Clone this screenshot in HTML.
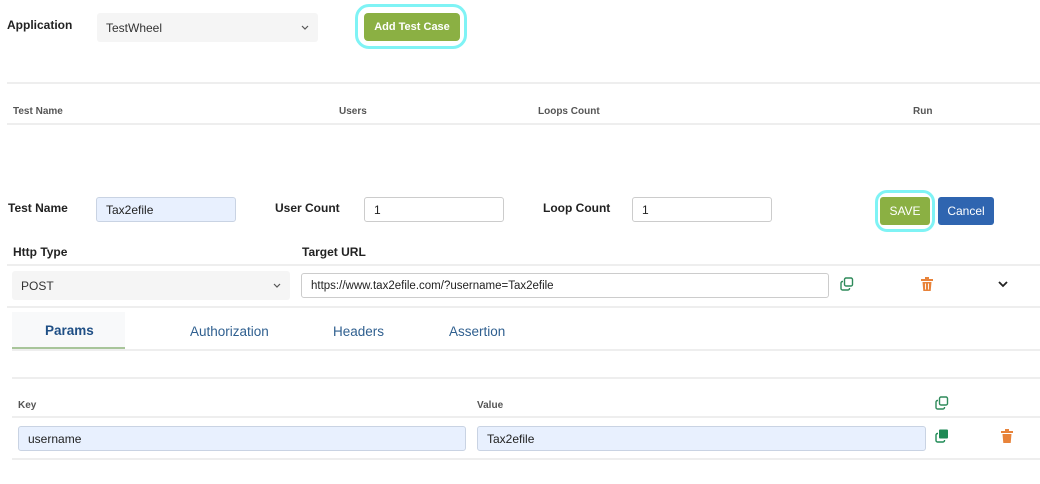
<!DOCTYPE html>
<html><head><meta charset="utf-8"><style>
*{box-sizing:border-box;margin:0;padding:0}
body{width:1040px;height:484px;background:#fff;font-family:"Liberation Sans",Arial,sans-serif;position:relative;overflow:hidden;color:#222}
.a{position:absolute}
.lbl{font-weight:bold;font-size:12px;color:#222}
.th{font-weight:bold;font-size:10px;color:#555}
.hr{position:absolute;height:2px;background:#eee}
.inp{position:absolute;border:1px solid #ccc;border-radius:3px;background:#fff;font-size:12px;padding-left:9px;display:flex;align-items:center}
.blue{background:#e8f0fe;border-color:#c9d3e3}
.sel{position:absolute;background:#f5f5f5;border-radius:3px;font-size:12px;color:#333;display:flex;align-items:center;padding-left:9px}
.tab{position:absolute;font-size:13.5px;color:#2f5f8f;top:324px}
</style></head><body>
<div class="a lbl" style="left:7px;top:18px">Application</div>
<div class="sel" style="left:97px;top:13px;width:221px;height:29px">TestWheel
<svg class="a" style="left:204px;top:12px" width="8" height="6" viewBox="0 0 8 6"><path d="M1 1l3 3 3-3" stroke="#555" fill="none" stroke-width="1.2"/></svg></div>
<div class="a" style="left:355px;top:4px;width:112px;height:45px;border:3px solid #7ff3f5;border-radius:14px"></div>
<div class="a" style="left:364px;top:13px;width:96px;height:28px;background:#8bb043;border-radius:4px;color:#fff;font-weight:bold;font-size:11px;display:flex;align-items:center;justify-content:center">Add Test Case</div>
<div class="hr" style="left:7px;top:82px;width:1033px"></div>
<div class="a th" style="left:13px;top:106px">Test Name</div>
<div class="a th" style="left:339px;top:106px">Users</div>
<div class="a th" style="left:538px;top:106px">Loops Count</div>
<div class="a th" style="left:913px;top:106px">Run</div>
<div class="hr" style="left:7px;top:123px;width:1033px"></div>

<div class="a lbl" style="left:8px;top:201px">Test Name</div>
<div class="inp blue" style="left:96px;top:197px;width:140px;height:25px">Tax2efile</div>
<div class="a lbl" style="left:275px;top:201px">User Count</div>
<div class="inp" style="left:364px;top:197px;width:140px;height:25px">1</div>
<div class="a lbl" style="left:543px;top:201px">Loop Count</div>
<div class="inp" style="left:632px;top:197px;width:140px;height:25px">1</div>
<div class="a" style="left:875px;top:190px;width:60px;height:42px;border:3px solid #7ff3f5;border-radius:12px"></div>
<div class="a" style="left:880px;top:197px;width:50px;height:28px;background:#8bb043;border-radius:3px;color:#fff;font-size:12px;display:flex;align-items:center;justify-content:center">SAVE</div>
<div class="a" style="left:938px;top:197px;width:56px;height:28px;background:#2f65b0;border-radius:3px;color:#fff;font-size:12px;display:flex;align-items:center;justify-content:center">Cancel</div>

<div class="a lbl" style="left:13px;top:245px">Http Type</div>
<div class="a lbl" style="left:302px;top:245px">Target URL</div>
<div class="hr" style="left:7px;top:264px;width:1033px"></div>
<div class="sel" style="left:12px;top:271px;width:278px;height:29px">POST
<svg class="a" style="left:261px;top:12px" width="8" height="6" viewBox="0 0 8 6"><path d="M1 1l3 3 3-3" stroke="#555" fill="none" stroke-width="1.2"/></svg></div>
<div class="inp" style="left:301px;top:273px;width:528px;height:25px;font-size:11.5px">https://www.tax2efile.com/?username=Tax2efile</div>
<svg class="a" style="left:840px;top:277px" width="14" height="14" viewBox="0 0 14 14"><rect x="4.5" y="1" width="8" height="8" rx="1.5" fill="none" stroke="#2e8a5a" stroke-width="1.4"/><path d="M3 4.5H2.5A1.5 1.5 0 0 0 1 6v5.5A1.5 1.5 0 0 0 2.5 13H8a1.5 1.5 0 0 0 1.5-1.5V11" fill="none" stroke="#2e8a5a" stroke-width="1.4"/></svg>
<svg class="a" style="left:921px;top:277px" width="12" height="14" viewBox="0 0 12 14"><rect x="0" y="2" width="12" height="2" fill="#e8833a"/><rect x="4" y="0" width="4" height="2" fill="#e8833a"/><path d="M1.5 5h9l-.8 9H2.3z" fill="#e8833a"/><path d="M4.5 6.5v6M7.5 6.5v6" stroke="#fff" stroke-width="0.9"/></svg>
<svg class="a" style="left:998px;top:281px" width="10" height="7" viewBox="0 0 10 7"><path d="M1 1l4 4 4-4" stroke="#222" fill="none" stroke-width="1.8"/></svg>
<div class="hr" style="left:7px;top:306px;width:1033px"></div>

<div class="a" style="left:12px;top:312px;width:113px;height:37px;background:#f8f9fa;border-bottom:2px solid #a8c59a"></div>
<div class="tab" style="left:45px;top:323px;font-weight:bold;color:#1f4f85">Params</div>
<div class="tab" style="left:190px">Authorization</div>
<div class="tab" style="left:333px">Headers</div>
<div class="tab" style="left:449px">Assertion</div>
<div class="hr" style="left:12px;top:349px;width:1028px"></div>
<div class="hr" style="left:12px;top:377px;width:1028px"></div>
<div class="a th" style="left:18px;top:400px">Key</div>
<div class="a th" style="left:477px;top:400px">Value</div>
<svg class="a" style="left:935px;top:396px" width="14" height="14" viewBox="0 0 14 14"><rect x="4.5" y="1" width="8" height="8" rx="1.5" fill="none" stroke="#2e8a5a" stroke-width="1.4"/><path d="M3 4.5H2.5A1.5 1.5 0 0 0 1 6v5.5A1.5 1.5 0 0 0 2.5 13H8a1.5 1.5 0 0 0 1.5-1.5V11" fill="none" stroke="#2e8a5a" stroke-width="1.4"/></svg>
<div class="hr" style="left:12px;top:416px;width:1028px"></div>
<div class="inp blue" style="left:18px;top:426px;width:448px;height:25px">username</div>
<div class="inp blue" style="left:477px;top:426px;width:449px;height:25px">Tax2efile</div>
<svg class="a" style="left:935px;top:429px" width="14" height="14" viewBox="0 0 14 14"><rect x="4" y="0.5" width="9" height="9" rx="1" fill="#1e8a55"/><path d="M3 4.5H2.5A1.5 1.5 0 0 0 1 6v5.5A1.5 1.5 0 0 0 2.5 13H8a1.5 1.5 0 0 0 1.5-1.5V11" fill="none" stroke="#1e8a55" stroke-width="1.4"/></svg>
<svg class="a" style="left:1001px;top:429px" width="12" height="14" viewBox="0 0 12 14"><rect x="0" y="2" width="12" height="2" fill="#e8833a"/><rect x="4" y="0" width="4" height="2" fill="#e8833a"/><path d="M1.5 5h9l-.8 9H2.3z" fill="#e8833a"/></svg>
<div class="hr" style="left:12px;top:458px;width:1028px"></div>
</body></html>
